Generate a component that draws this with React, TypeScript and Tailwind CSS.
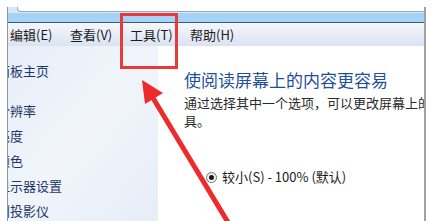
const cjk = "font-['Noto_Sans_CJK_SC','Noto_Sans',sans-serif]";

const menus = ['编辑(E)', '查看(V)', '工具(T)', '帮助(H)'];

const sideItems = [
  { text: '控制面板主页', gap: false },
  { text: '调整分辨率', gap: true },
  { text: '调整亮度', gap: false },
  { text: '校准颜色', gap: false },
  { text: '更改显示器设置', gap: false },
  { text: '连接到投影仪', gap: false },
];

function Arrow() {
  return (
    <svg className="absolute inset-0 pointer-events-none" width="433" height="221" viewBox="0 0 433 221">
      <line x1="229" y1="224" x2="153" y2="98" stroke="#ee2b2b" strokeWidth="5" strokeLinecap="butt" />
      <polygon points="142,80 163,93 145,104" fill="#ee2b2b" />
    </svg>
  );
}

export default function App() {
  return (
    <div className={`relative w-[433px] h-[221px] overflow-hidden bg-white pt-[7px] pl-[7px] ${cjk}`}>
      <div className="flex h-full w-[419px] flex-col border-l border-r-2 border-l-[#8c96a3] border-r-[#a2a2a2]">
        {/* address strip */}
        <div className="h-[6px] bg-[#d8e8f6]">
          <div className="ml-[9px] h-[5px] rounded-bl-sm border-b border-l border-[#9aa6b2] bg-white" />
        </div>
        <div className="h-[9px] bg-[#a4d3f7]" />
        <div className="h-px bg-[#3f5a78]" />

        {/* menu bar */}
        <div className="flex h-[23px] items-center bg-gradient-to-b from-[#f4f7fc] to-[#dbe3f2] pl-[2px] text-[13px] text-[#1b1b1b]">
          {menus.map((m) => (
            <div key={m} className="w-[60px] whitespace-nowrap">
              {m}
            </div>
          ))}
        </div>

        {/* body */}
        <div className="flex flex-1 overflow-hidden">
          <div className="w-[150px] overflow-hidden bg-gradient-to-br from-[#e7eef8] via-[#f1f5fb] to-[#e6edf7] pt-[12px] text-[13px] leading-[25px] text-[#1d3866]">
            {sideItems.map((s) => (
              <div key={s.text} className={`-ml-[37px] whitespace-nowrap ${s.gap ? 'mt-[15px]' : ''}`}>
                {s.text}
              </div>
            ))}
          </div>

          <div className="flex-1 overflow-hidden bg-white pl-[26px] pt-[22px]">
            <div className="whitespace-nowrap text-[17px] leading-[24px] text-[#1f4f9c]">使阅读屏幕上的内容更容易</div>
            <div className="mt-[2px] text-[13px] leading-[18px] text-[#2a2a2a]">
              <div className="whitespace-nowrap">通过选择其中一个选项，可以更改屏幕上的文本大小以及其他项。</div>
              <div>具。</div>
            </div>
            <div className="mt-[37px] ml-[22px] flex h-[20px] items-center gap-[5px] text-[13px] text-[#1b1b1b]">
              <span className="flex h-[11px] w-[11px] items-center justify-center rounded-full border border-[#6f6f6f] bg-gradient-to-b from-[#e9e9e9] to-white">
                <span className="h-[5px] w-[5px] rounded-full bg-[#151515]" />
              </span>
              <span className="whitespace-nowrap">较小(S) - 100% (默认)</span>
            </div>
          </div>
        </div>
      </div>

      {/* highlight box */}
      <div className="absolute left-[120px] top-[13px] h-[56px] w-[58px] border-[3px] border-[#e63b3b]" />
      <Arrow />
    </div>
  );
}
